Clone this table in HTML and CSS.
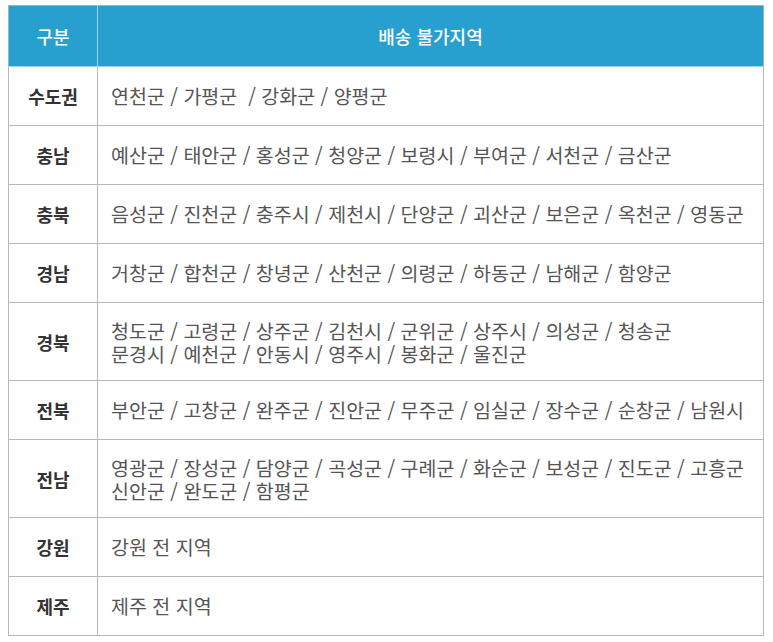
FILE: index.html
```html
<!DOCTYPE html>
<html lang="ko">
<head>
<meta charset="utf-8">
<link rel="stylesheet" href="styles.css">
</head>
<body>
<table class="zones">
  <thead>
    <tr class="head"><th class="c1">구분</th><th class="c2">배송 불가지역</th></tr>
  </thead>
  <tbody>
    <tr><td class="name">수도권</td><td class="list">연천군 / 가평군 &nbsp;/ 강화군 / 양평군</td></tr>
    <tr><td class="name">충남</td><td class="list">예산군 / 태안군 / 홍성군 / 청양군 / 보령시 / 부여군 / 서천군 / 금산군</td></tr>
    <tr><td class="name">충북</td><td class="list">음성군 / 진천군 / 충주시 / 제천시 / 단양군 / 괴산군 / 보은군 / 옥천군 / 영동군</td></tr>
    <tr><td class="name">경남</td><td class="list">거창군 / 합천군 / 창녕군 / 산천군 / 의령군 / 하동군 / 남해군 / 함양군</td></tr>
    <tr class="tall"><td class="name">경북</td><td class="list"><div class="ln">청도군 / 고령군 / 상주군 / 김천시 / 군위군 / 상주시 / 의성군 / 청송군</div><div class="ln">문경시 / 예천군 / 안동시 / 영주시 / 봉화군 / 울진군</div></td></tr>
    <tr><td class="name">전북</td><td class="list">부안군 / 고창군 / 완주군 / 진안군 / 무주군 / 임실군 / 장수군 / 순창군 / 남원시</td></tr>
    <tr class="tall"><td class="name">전남</td><td class="list"><div class="ln">영광군 / 장성군 / 담양군 / 곡성군 / 구례군 / 화순군 / 보성군 / 진도군 / 고흥군</div><div class="ln">신안군 / 완도군 / 함평군</div></td></tr>
    <tr><td class="name">강원</td><td class="list">강원 전 지역</td></tr>
    <tr><td class="name">제주</td><td class="list">제주 전 지역</td></tr>
  </tbody>
</table>
</body>
</html>
```

FILE: styles.css
```css
html, body {
  margin: 0;
  padding: 0;
  background: #ffffff;
}
body {
  padding: 5px 0 0 8px;
  font-family: "Noto Sans CJK KR", "Noto Sans", sans-serif;
}
.zones {
  border-collapse: collapse;
  width: 756px;
  table-layout: fixed;
}
.zones th {
  background: #27a0d0;
  color: #ffffff;
  font-size: 18px;
  font-weight: 500;
  height: 60px;
  padding: 0;
  border: 1px solid #9fd3ea;
  border-top-color: #8fb9cc;
  text-align: center;
  vertical-align: middle;
}
.zones th.c1 { width: 88px; border-left-color: #8fb9cc; }
.zones th.c2 { border-right-color: #8fb9cc; }
.zones td {
  border: 1px solid #b8b8b8;
  height: 58px;
  padding: 0;
  vertical-align: middle;
  line-height: 22px;
}
.zones tr.tall td { height: 77px; }
.zones td.name {
  text-align: center;
  font-weight: 700;
  font-size: 18px;
  color: #333333;
}
.zones td.list {
  padding-left: 13px;
  color: #555555;
  white-space: nowrap;
  font-size: 19.5px;
}
.ln {
  height: 23px;
  line-height: 23px;
}
```
